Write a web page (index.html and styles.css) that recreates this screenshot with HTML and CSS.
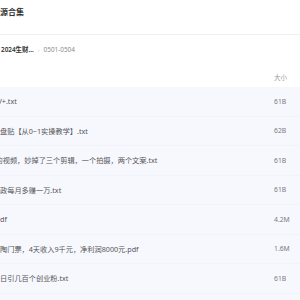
FILE: index.html
```html
<!DOCTYPE html>
<html>
<head>
<meta charset="utf-8">
<link rel="stylesheet" href="styles.css">
</head>
<body>
<div class="page">
  <div class="title">源合集</div>
  <div class="crumbs"><span class="crumb-main">2024生财...</span><span class="sep">›</span><span class="crumb">0501-0504</span></div>
  <div class="thead"><span class="th-name"></span><span class="th-size">大小</span></div>
  <div class="list">
    <div class="row"><span class="name"><span class="cut1">V</span>+.txt</span><span class="size">61B</span></div>
    <div class="row"><span class="name">盘贴【从0~1实操教学】.txt</span><span class="size">62B</span></div>
    <div class="row"><span class="name"><span class="cut3">的</span>视频，妙掉了三个剪辑，一个拍摄，两个文案.txt</span><span class="size">61B</span></div>
    <div class="row"><span class="name">政每月多赚一万.txt</span><span class="size">61B</span></div>
    <div class="row"><span class="name">df</span><span class="size">4.2M</span></div>
    <div class="row"><span class="name">陶门票，4天收入9千元，净利润8000元.pdf</span><span class="size">1.6M</span></div>
    <div class="row"><span class="name">日引几百个创业粉.txt</span><span class="size">61B</span></div>
  </div>
</div>
</body>
</html>
```
FILE: styles.css
```css
html, body {
  margin: 0;
  padding: 0;
  background: #ffffff;
}
body {
  width: 300px;
  height: 300px;
  overflow: hidden;
  font-family: "Noto Sans", "Noto Sans CJK SC", sans-serif;
}
.page {
  width: 300px;
}
.title {
  height: 24px;
  line-height: 24px;
  padding-bottom: 10px;
  border-bottom: 1px solid #f0f0f2;
  font-size: 8px;
  font-weight: 700;
  color: #333333;
  white-space: nowrap;
}
.crumbs {
  height: 30px;
  line-height: 30px;
  font-size: 6.4px;
  white-space: nowrap;
  padding-left: 1px;
  display: flex;
  align-items: center;
}
.crumb-main {
  color: #333333;
  font-weight: 600;
}
.sep {
  color: #c8c8cc;
  margin: 0 4px 0 4px;
  font-size: 6px;
}
.crumb {
  color: #8a8a90;
}
.thead {
  height: 16px;
  padding-top: 5px;
  padding-bottom: 1px;
  line-height: 16px;
  display: flex;
  font-size: 6.5px;
  color: #9a9aa0;
}
.th-name {
  flex: 1;
}
.th-size {
  width: 26px;
}
.list {
  background: #f7f8fe;
  height: 213px;
  overflow: hidden;
}
.row {
  height: 28.5px;
  border-bottom: 1px solid #f1f2fa;
  display: flex;
  align-items: center;
  white-space: nowrap;
  font-size: 7.2px;
}
.name {
  flex: 1;
  overflow: hidden;
  color: #555558;
}
.size {
  width: 26px;
  color: #7a7a80;
  font-size: 6.8px;
}
.cut1 {
  margin-left: -2.5px;
}
.cut3 {
  margin-left: -4.5px;
}
```
